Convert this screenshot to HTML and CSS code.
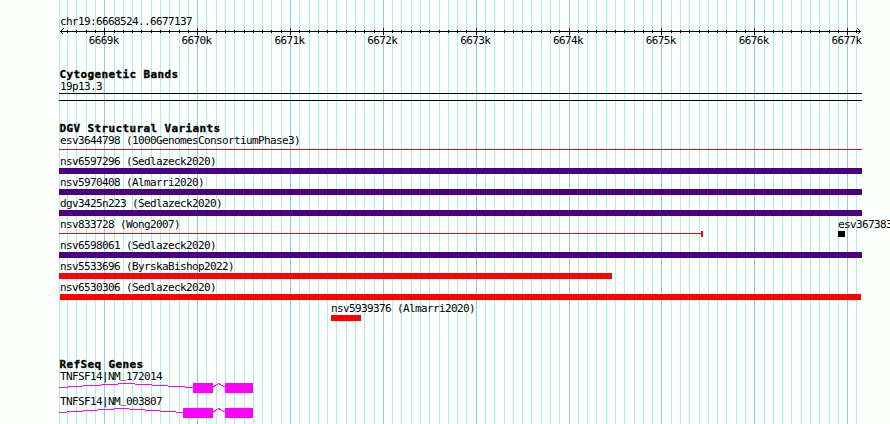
FILE: index.html
```html
<!DOCTYPE html>
<html lang="en">
<head>
<meta charset="utf-8">
<title>chr19:6668524..6677137</title>
<link rel="stylesheet" href="styles.css">
</head>
<body>
<main class="browser">
  <svg class="grid" width="890" height="424" aria-hidden="true">
    <defs>
      <path id="minor" d="M59.5 0v424m8-424v424m9-424v424m10-424v424m9-424v424M114.5 0v424m9-424v424m9-424v424m9-424v424m10-424v424m9-424v424m9-424v424m10-424v424m9-424v424M206.5 0v424m10-424v424m9-424v424m9-424v424m10-424v424m9-424v424m9-424v424m9-424v424m10-424v424M299.5 0v424m10-424v424m9-424v424m9-424v424m9-424v424m10-424v424m9-424v424m9-424v424m10-424v424M392.5 0v424m9-424v424m10-424v424m9-424v424m9-424v424m10-424v424m9-424v424m9-424v424m9-424v424M485.5 0v424m9-424v424m10-424v424m9-424v424m9-424v424m9-424v424m10-424v424m9-424v424m9-424v424M578.5 0v424m9-424v424m9-424v424m10-424v424m9-424v424m9-424v424m10-424v424m9-424v424m9-424v424M671.5 0v424m9-424v424m9-424v424m10-424v424m9-424v424m9-424v424m9-424v424m10-424v424m9-424v424M764.5 0v424m9-424v424m9-424v424m9-424v424m10-424v424m9-424v424m9-424v424m10-424v424m9-424v424M856.5 0v424"/>
      <path id="major" d="M104.5 0v424M197.5 0v424M290.5 0v424M383.5 0v424M476.5 0v424M569.5 0v424M661.5 0v424M754.5 0v424M847.5 0v424"/>
      <clipPath id="short"><rect x="66" y="30" width="795" height="3"/></clipPath>
      <clipPath id="tall"><rect x="60" y="28" width="801" height="7"/></clipPath>
    </defs>
    <use href="#minor" class="minor"/>
    <use href="#major" class="major"/>
    <g clip-path="url(#short)"><use href="#minor" class="tick"/></g>
    <g clip-path="url(#tall)"><use href="#major" class="tick"/></g>
  </svg>

  <header class="ruler">
    <div class="label">chr19:6668524..6677137</div>
    <svg class="axis" width="803" height="7"><path d="M1 3.5H802M4.5 .5L1.5 3.5L4.5 6.5M798.5 .5L801.5 3.5L798.5 6.5"/></svg>
    <div class="scale"><span>6669k</span><span>6670k</span><span>6671k</span><span>6672k</span><span>6673k</span><span>6674k</span><span>6675k</span><span>6676k</span><span>6677k</span></div>
  </header>

  <section class="track bands">
    <h2>Cytogenetic Bands</h2>
    <div class="label">19p13.3</div>
    <div class="band"></div>
  </section>

  <section class="track variants">
    <h2>DGV Structural Variants</h2>
    <div class="row"><div class="label">esv3644798 (1000GenomesConsortiumPhase3)</div><div class="line full"></div></div>
    <div class="row"><div class="label">nsv6597296 (Sedlazeck2020)</div><div class="bar full"></div></div>
    <div class="row"><div class="label">nsv5970408 (Almarri2020)</div><div class="bar full"></div></div>
    <div class="row"><div class="label">dgv3425n223 (Sedlazeck2020)</div><div class="bar full"></div></div>
    <div class="row pair">
      <div class="wong"><div class="label">nsv833728 (Wong2007)</div><div class="capped"><div class="line"></div><div class="cap"></div></div></div>
      <div class="clipped"><div class="label">esv367383</div><div class="bar black"></div></div>
    </div>
    <div class="row"><div class="label">nsv6598061 (Sedlazeck2020)</div><div class="bar full"></div></div>
    <div class="row"><div class="label">nsv5533696 (ByrskaBishop2022)</div><div class="bar red partial"></div></div>
    <div class="row"><div class="label">nsv6530306 (Sedlazeck2020)</div><div class="bar red inner"></div></div>
    <div class="row offset"><div class="label">nsv5939376 (Almarri2020)</div><div class="bar red small"></div></div>
  </section>

  <section class="track genes">
    <h2>RefSeq Genes</h2>
    <div class="gene"><div class="label">TNFSF14|NM<span class="under">_</span>172014</div>
      <svg width="194" height="10"><path class="intron" d="M0 4.5H9M9 3.5H24M24 2.5H42M42 1.5H59M59 .5H76M76 1.5H93M93 2.5H109M109 3.5H126M126 4.5H134M154 4L159.5 .5L166 4"/><path class="exon" d="M134 0h20v10h-20zM166 0h28v10h-28z"/></svg></div>
    <div class="gene"><div class="label">TNFSF14|NM<span class="under">_</span>003807</div>
      <svg width="194" height="10"><path class="intron" d="M0 4.5H8M8 3.5H24M24 2.5H39M39 1.5H55M55 .5H70M70 1.5H86M86 2.5H101M101 3.5H117M117 4.5H124M154 4L159.5 .5L166 4"/><path class="exon" d="M124 0h30v10h-30zM166 0h28v10h-28z"/></svg></div>
  </section>
</main>
</body>
</html>
```
FILE: styles.css
```css
* { box-sizing: border-box; }
body { margin: 0; background: #fdfffc; overflow: hidden; }
.browser {
  position: relative;
  z-index: 0;
  width: 890px;
  height: 424px;
  padding-left: 59px;
  overflow: hidden;
  color: #000;
  font: 11px/12px "DejaVu Sans Mono", monospace;
  letter-spacing: -0.622px;
}
svg { display: block; shape-rendering: crispEdges; }
.grid { position: absolute; left: 0; top: 0; z-index: -1; }
.minor { stroke: #afeeee; }
.major { stroke: #87ceeb; }
.tick { stroke: #000; }
.label { height: 12px; padding-left: 1px; white-space: pre; }
.under { vertical-align: 2px; line-height: 0; }
.ruler { height: 69px; padding-top: 16px; }
.axis { fill: none; stroke: #000; }
.scale { display: flex; padding-left: 29.7px; }
.scale span { width: 92.87px; flex: none; }
h2 {
  margin: 0;
  height: 12px;
  padding-left: 0.5px;
  font-size: 11px;
  line-height: 12px;
  font-weight: bold;
  letter-spacing: 0.378px;
  -webkit-text-stroke: 0.35px #000;
}
.track { width: 831px; }
.bands { height: 54px; }
.band { width: 803px; height: 8px; border: solid #000; border-width: 1px 0; }
.variants { height: 236px; }
.row { height: 21px; }
.bar { height: 6px; background: #4b0082; }
.full { width: 803px; }
.line { height: 1px; margin-top: 2px; background: #f00; }
.row > .line.full { background: #e01010; }
.red { background: #f00; }
.pair { display: flex; }
.wong { width: 779px; flex: none; }
.capped { display: flex; width: 644px; }
.capped .line { flex: 1; }
.cap { width: 2px; height: 6px; background: #f00; }
.clipped { width: 52px; overflow: hidden; }
.clipped .label { padding-left: 0; }
.black { width: 7px; background: #000; }
.partial { width: 553px; }
.inner { width: 801px; margin-left: 1px; }
.offset { padding-left: 272px; }
.offset .label { padding-left: 0; }
.small { width: 30px; }
.gene { height: 25px; }
.intron { fill: none; stroke: #f0f; }
.exon { fill: #f0f; }
```
